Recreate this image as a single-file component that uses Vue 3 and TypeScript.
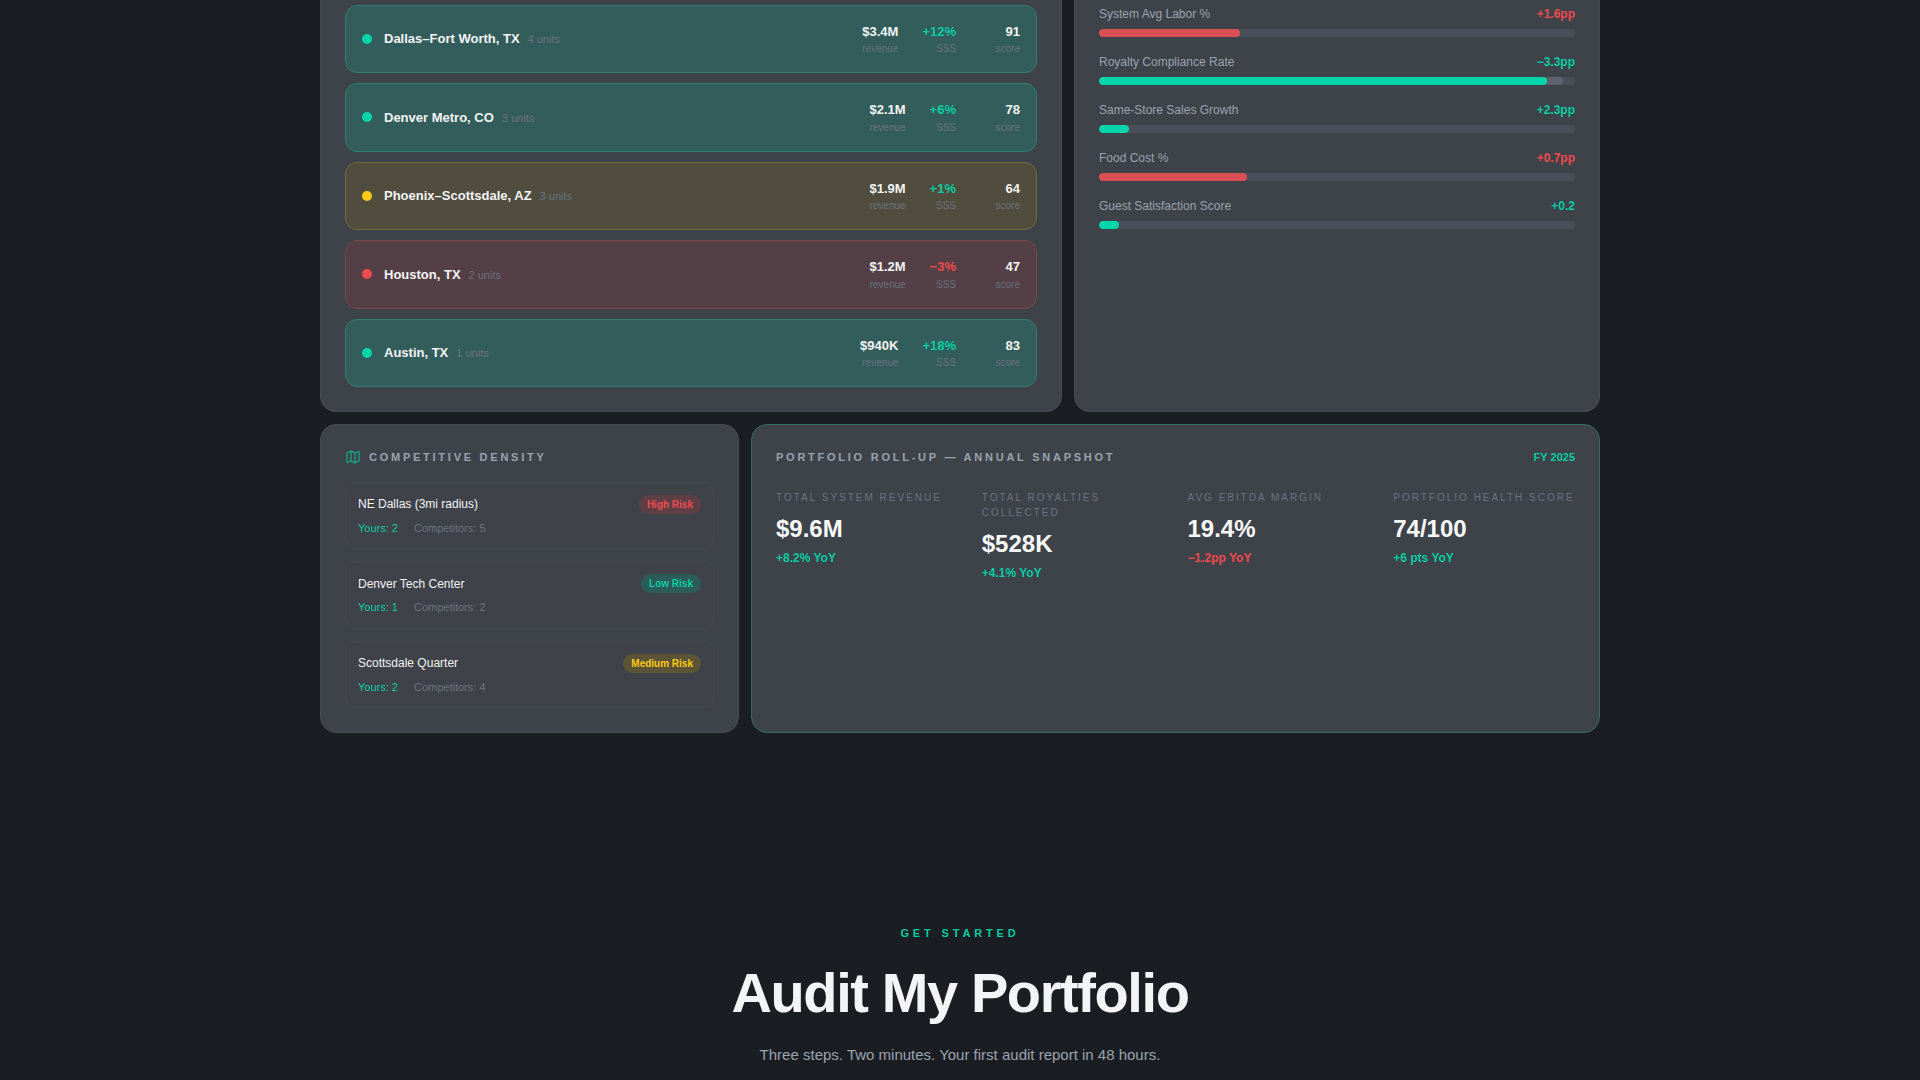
<template>
  <div class="page">
    <div class="grid-top">
      <section class="card card-top">
        <div class="market-list">
          <div v-for="m in markets" :key="m.name" class="market" :class="m.status">
            <span class="dot"></span>
            <div class="market-title">
              <span class="market-name">{{ m.name }}</span>
              <span class="market-units">{{ m.units }} units</span>
            </div>
            <div class="market-stats">
              <div class="stat">
                <div class="stat-value">{{ m.revenue }}</div>
                <div class="stat-label">revenue</div>
              </div>
              <div class="stat">
                <div class="stat-value" :class="m.sss.startsWith('+') ? 'up' : 'down'">{{ m.sss }}</div>
                <div class="stat-label">SSS</div>
              </div>
              <div class="stat stat-score">
                <div class="stat-value">{{ m.score }}</div>
                <div class="stat-label">score</div>
              </div>
            </div>
          </div>
        </div>
      </section>

      <section class="card card-top">
        <div class="kpi-list">
          <div v-for="k in kpis" :key="k.label" class="kpi">
            <div class="kpi-head">
              <span class="kpi-label">{{ k.label }}</span>
              <span class="kpi-delta" :class="k.good ? 'up' : 'down'">{{ k.delta }}</span>
            </div>
            <div class="track">
              <div v-if="k.base" class="base" :style="{ width: k.base + '%' }"></div>
              <div class="fill" :class="k.good ? 'fill-up' : 'fill-down'" :style="{ width: k.pct + '%' }"></div>
            </div>
          </div>
        </div>
      </section>
    </div>

    <div class="grid-bottom">
      <section class="card">
        <div class="card-title">
          <svg class="title-icon" width="16" height="16" viewBox="0 0 24 24" fill="none" stroke="currentColor" stroke-width="2" stroke-linecap="round" stroke-linejoin="round">
            <path d="M14.106 5.553a2 2 0 0 0 1.788 0l3.659-1.83A1 1 0 0 1 21 4.619v12.764a1 1 0 0 1-.553.894l-4.553 2.277a2 2 0 0 1-1.788 0l-4.212-2.106a2 2 0 0 0-1.788 0l-3.659 1.83A1 1 0 0 1 3 19.381V6.618a1 1 0 0 1 .553-.894l4.553-2.277a2 2 0 0 1 1.788 0z" />
            <path d="M15 5.764v15" />
            <path d="M9 3.236v15" />
          </svg>
          <span>Competitive Density</span>
        </div>
        <div class="zone-list">
          <div v-for="z in zones" :key="z.name" class="zone">
            <div class="zone-head">
              <span class="zone-name">{{ z.name }}</span>
              <span class="badge" :class="z.level">{{ z.risk }}</span>
            </div>
            <div class="zone-meta">
              <span class="yours">Yours: {{ z.yours }}</span>
              <span class="rivals">Competitors: {{ z.rivals }}</span>
            </div>
          </div>
        </div>
      </section>

      <section class="card card-rollup">
        <div class="rollup-head">
          <span class="card-title">Portfolio Roll-Up — Annual Snapshot</span>
          <span class="fy">FY 2025</span>
        </div>
        <div class="rollup-grid">
          <div v-for="r in rollup" :key="r.label">
            <div class="rollup-label">{{ r.label }}</div>
            <div class="rollup-value">{{ r.value }}</div>
            <div class="rollup-delta" :class="r.good ? 'up' : 'down'">{{ r.delta }}</div>
          </div>
        </div>
      </section>
    </div>

    <section class="cta">
      <div class="eyebrow">Get Started</div>
      <h2 class="cta-title">Audit My Portfolio</h2>
      <p class="cta-sub">Three steps. Two minutes. Your first audit report in 48 hours.</p>
    </section>
  </div>
</template>

<script setup lang="ts">
interface Market {
  name: string
  units: number
  revenue: string
  sss: string
  score: number
  status: 'good' | 'warn' | 'bad'
}

interface Kpi {
  label: string
  delta: string
  pct: number
  base?: number
  good: boolean
}

const markets: Market[] = [
  { name: 'Dallas–Fort Worth, TX', units: 4, revenue: '$3.4M', sss: '+12%', score: 91, status: 'good' },
  { name: 'Denver Metro, CO', units: 3, revenue: '$2.1M', sss: '+6%', score: 78, status: 'good' },
  { name: 'Phoenix–Scottsdale, AZ', units: 3, revenue: '$1.9M', sss: '+1%', score: 64, status: 'warn' },
  { name: 'Houston, TX', units: 2, revenue: '$1.2M', sss: '−3%', score: 47, status: 'bad' },
  { name: 'Austin, TX', units: 1, revenue: '$940K', sss: '+18%', score: 83, status: 'good' }
]

const kpis: Kpi[] = [
  { label: 'System Avg Labor %', delta: '+1.6pp', pct: 29.7, good: false },
  { label: 'Royalty Compliance Rate', delta: '−3.3pp', pct: 94.2, base: 97.5, good: true },
  { label: 'Same-Store Sales Growth', delta: '+2.3pp', pct: 6.4, good: true },
  { label: 'Food Cost %', delta: '+0.7pp', pct: 31.1, good: false },
  { label: 'Guest Satisfaction Score', delta: '+0.2', pct: 4.2, good: true }
]

const zones = [
  { name: 'NE Dallas (3mi radius)', risk: 'High Risk', level: 'high', yours: 2, rivals: 5 },
  { name: 'Denver Tech Center', risk: 'Low Risk', level: 'low', yours: 1, rivals: 2 },
  { name: 'Scottsdale Quarter', risk: 'Medium Risk', level: 'medium', yours: 2, rivals: 4 }
]

const rollup = [
  { label: 'Total System Revenue', value: '$9.6M', delta: '+8.2% YoY', good: true },
  { label: 'Total Royalties Collected', value: '$528K', delta: '+4.1% YoY', good: true },
  { label: 'Avg EBITDA Margin', value: '19.4%', delta: '−1.2pp YoY', good: false },
  { label: 'Portfolio Health Score', value: '74/100', delta: '+6 pts YoY', good: true }
]
</script>

<style>
html,
body {
  margin: 0;
  height: 1080px;
  overflow: hidden;
  background: #1a1e22;
}
</style>

<style scoped>
.page {
  width: 1280px;
  margin: 0 auto;
  font-family: "Liberation Sans", Arial, sans-serif;
  line-height: 1.5;
  color: #f3f4f6;
}

.grid-top {
  display: grid;
  grid-template-columns: 742px 1fr;
  gap: 12px;
}

.grid-bottom {
  display: grid;
  grid-template-columns: 419px 1fr;
  gap: 12px;
  margin-top: 12px;
}

.card {
  background: #3e4249;
  border: 1px solid #484c54;
  border-radius: 16px;
  padding: 24px;
}

/* page is scrolled, top of these two cards is off screen */
.card-top {
  border-top: none;
  border-top-left-radius: 0;
  border-top-right-radius: 0;
  padding-top: 4.5px;
}

.up {
  color: #08cba3;
}

.down {
  color: #f04b4f;
}

.market-list {
  display: flex;
  flex-direction: column;
  gap: 10px;
}

.market {
  display: flex;
  align-items: center;
  padding: 16px;
  border: 1px solid;
  border-radius: 12px;
}

.market.good {
  background: #335d5b;
  border-color: #2f7f72;
}

.market.warn {
  background: #504d3f;
  border-color: #796a3c;
}

.market.bad {
  background: #533f45;
  border-color: #7a474b;
}

.dot {
  width: 10px;
  height: 10px;
  border-radius: 50%;
  margin-right: 12px;
  flex-shrink: 0;
}

.good .dot {
  background: #00d4aa;
}

.warn .dot {
  background: #facc15;
}

.bad .dot {
  background: #f04b4f;
}

.market-title {
  font-size: 13px;
}

.market-name {
  font-weight: 700;
  color: #f3f4f6;
}

.market-units {
  font-size: 11px;
  color: #6b7280;
  margin-left: 8px;
}

.market-stats {
  display: flex;
  gap: 24px;
  margin-left: auto;
  text-align: right;
}

.stat-score {
  min-width: 40px;
}

.stat-value {
  font-size: 13px;
  font-weight: 700;
}

.stat-label {
  font-size: 10px;
  color: #6b7280;
}

.kpi-list {
  display: flex;
  flex-direction: column;
  gap: 16px;
}

.kpi-head {
  display: flex;
  justify-content: space-between;
  margin-bottom: 6px;
  font-size: 12px;
}

.kpi-label {
  color: #9ca3af;
}

.kpi-delta {
  font-weight: 700;
}

.track {
  position: relative;
  height: 8px;
  border-radius: 4px;
  background: #4a4e59;
  overflow: hidden;
}

.base {
  position: absolute;
  top: 0;
  left: 0;
  height: 100%;
  background: #5f636d;
  border-radius: 4px;
}

.fill {
  position: relative;
  height: 100%;
  border-radius: 4px;
}

.fill-up {
  background: #00d4aa;
}

.fill-down {
  background: #d85054;
}

.card-title {
  display: flex;
  align-items: center;
  gap: 8px;
  font-size: 11px;
  font-weight: 700;
  letter-spacing: 0.25em;
  text-transform: uppercase;
  color: #9ca3af;
  margin-bottom: 16px;
}

.title-icon {
  color: #14a386;
  flex-shrink: 0;
}

.zone-list {
  display: flex;
  flex-direction: column;
  gap: 12px;
}

.zone {
  padding: 12px;
  border: 1px solid #44484f;
  border-radius: 10px;
  background: #3f4249;
}

.zone-head {
  display: flex;
  justify-content: space-between;
  align-items: center;
  margin-bottom: 6px;
}

.zone-name {
  font-size: 12px;
  color: #f3f4f6;
}

.badge {
  font-size: 10px;
  font-weight: 700;
  padding: 2px 8px;
  border-radius: 999px;
}

.badge.high {
  background: #5f3f45;
  color: #f04b4f;
}

.badge.low {
  background: #2c5c57;
  color: #08cba3;
}

.badge.medium {
  background: #5c5436;
  color: #facc15;
}

.zone-meta {
  display: flex;
  gap: 16px;
  font-size: 11px;
}

.yours {
  color: #08cba3;
}

.rivals {
  color: #6b7280;
}

.card-rollup {
  border-color: #336a63;
}

.rollup-head {
  display: flex;
  justify-content: space-between;
  align-items: flex-start;
  margin-bottom: 24px;
}

.rollup-head .card-title {
  margin-bottom: 0;
}

.fy {
  font-size: 11px;
  line-height: 16.5px;
  font-weight: 700;
  color: #08cba3;
}

.rollup-grid {
  display: grid;
  grid-template-columns: repeat(4, 1fr);
  gap: 24px;
}

.rollup-label {
  font-size: 10px;
  letter-spacing: 0.2em;
  text-transform: uppercase;
  color: #6b7280;
}

.rollup-value {
  font-size: 24px;
  font-weight: 700;
  margin-top: 6px;
  color: #f9fafb;
}

.rollup-delta {
  font-size: 12px;
  font-weight: 700;
  margin-top: 2px;
}

.cta {
  padding-top: 192px;
  text-align: center;
}

.eyebrow {
  font-size: 11px;
  font-weight: 700;
  letter-spacing: 0.35em;
  text-transform: uppercase;
  color: #08cba3;
}

.cta-title {
  margin: 17px 0 0;
  font-size: 56px;
  font-weight: 700;
  line-height: 1.2;
  letter-spacing: -0.025em;
  color: #f3f4f6;
}

.cta-sub {
  margin: 18px 0 0;
  font-size: 15px;
  color: #9ca3af;
}
</style>
